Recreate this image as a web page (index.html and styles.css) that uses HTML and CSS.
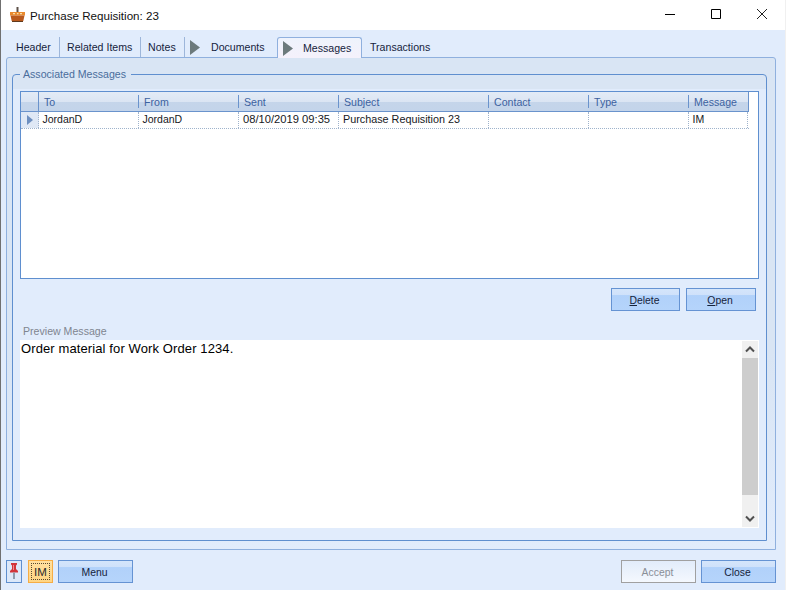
FILE: index.html
```html
<!DOCTYPE html>
<html lang="en">
<head>
<meta charset="utf-8">
<title>Purchase Requisition: 23</title>
<link rel="stylesheet" href="styles.css">
</head>
<body>
<div class="window">
  <header class="titlebar">
    <svg class="app-icon" width="17" height="16" viewBox="0 0 17 16">
      <path d="M7.5 0h2v6h-2z" fill="#5c5048"/>
      <path d="M1 5h15v3.5H1z" fill="#e98a2e"/>
      <path d="M1.5 8.5h14l-1.2 5.5H2.7z" fill="#b9591c"/>
      <path d="M4 6h2v1.200H4zM8 6h1.500v1.200H8zM11 6h2v1.200h-2z" fill="#f9deaa"/>
      <path d="M3 14h11v1H3z" fill="#5f3a1e"/>
    </svg>
    <span class="title">Purchase Requisition: 23</span>
    <div class="win-controls">
      <svg class="win-btn" width="46" height="30" viewBox="0 0 46 30"><path d="M18 14.500h10" stroke="#000" fill="none"/></svg>
      <svg class="win-btn" width="46" height="30" viewBox="0 0 46 30"><path d="M18.500 9.500h9v9h-9z" stroke="#000" fill="none"/></svg>
      <svg class="win-btn" width="46" height="30" viewBox="0 0 46 30"><path d="M18 9l10 10M28 9l-10 10" stroke="#222" fill="none"/></svg>
    </div>
  </header>
  <main class="client">
    <nav class="tabs">
      <span class="tab tab-sep tab-header">Header</span>
      <span class="tab tab-sep tab-related">Related Items</span>
      <span class="tab tab-sep tab-notes">Notes</span>
      <span class="tab tab-docs"><svg class="tab-arrow" width="10" height="15" viewBox="0 0 10 15"><path d="M0 0l10 7.500-10 7.500z" fill="#6c7a7c"/></svg><span>Documents</span></span>
      <span class="tab tab-active"><svg class="tab-arrow" width="10" height="15" viewBox="0 0 10 15"><path d="M0 0l10 7.500-10 7.500z" fill="#6c7a7c"/></svg><span>Messages</span></span>
      <span class="tab tab-trans">Transactions</span>
    </nav>
    <section class="panel">
      <fieldset class="group">
        <legend class="group-label">Associated Messages</legend>
        <div class="grid">
          <div class="grid-head">
            <div class="rowhead"></div>
            <div class="hcell c-to">To</div>
            <div class="hcell c-from">From</div>
            <div class="hcell c-sent">Sent</div>
            <div class="hcell c-subject">Subject</div>
            <div class="hcell c-contact">Contact</div>
            <div class="hcell c-type">Type</div>
            <div class="hcell c-msg">Message</div>
          </div>
          <div class="grid-row">
            <div class="rowhead rowmark"><svg width="6" height="10" viewBox="0 0 6 10"><path d="M0 0l6 5-6 5z" fill="#6d8fc0"/></svg></div>
            <div class="cell c-to">JordanD</div>
            <div class="cell c-from">JordanD</div>
            <div class="cell c-sent cell-date">08/10/2019 09:35</div>
            <div class="cell c-subject cell-subject">Purchase Requisition 23</div>
            <div class="cell c-contact"></div>
            <div class="cell c-type"></div>
            <div class="cell c-msg">IM</div>
          </div>
        </div>
        <div class="grid-actions">
          <button class="btn btn-delete" type="button"><u>D</u>elete</button>
          <button class="btn btn-open" type="button"><u>O</u>pen</button>
        </div>
        <div class="preview-label">Preview Message</div>
        <div class="preview">
          <p class="preview-text">Order material for Work Order 1234.</p>
          <div class="scrollbar">
            <svg class="sb-arrow" width="16" height="17" viewBox="0 0 16 17"><path d="M4 10.500l4-4 4 4" fill="none" stroke="#505050" stroke-width="2"/></svg>
            <div class="sb-thumb"></div>
            <svg class="sb-arrow sb-down" width="16" height="17" viewBox="0 0 16 17"><path d="M4 6.500l4 4 4-4" fill="none" stroke="#505050" stroke-width="2"/></svg>
          </div>
        </div>
      </fieldset>
    </section>
    <footer class="footer">
      <button class="pin" type="button" aria-label="Pin">
        <svg width="12" height="20" viewBox="0 0 12 20">
          <path d="M3 1h6v1.500L8 3.500V7l2 2v1.500H2V9l2-2V3.500L3 2.500z" fill="#d2343a"/>
          <path d="M5 3h1v5H5z" fill="#ef8f92"/>
          <path d="M5 10.500h2V17H5z" fill="#8f9cae"/>
        </svg>
      </button>
      <button class="im" type="button"><span class="im-inner">IM</span></button>
      <button class="btn btn-menu" type="button">Menu</button>
      <div class="spacer"></div>
      <button class="btn btn-disabled" type="button" disabled>Accept</button>
      <button class="btn btn-close" type="button">Close</button>
    </footer>
  </main>
</div>
</body>
</html>
```
FILE: styles.css
```css
* { box-sizing: border-box; }
html, body { margin: 0; padding: 0; }
body { width: 786px; height: 590px; overflow: hidden; background: #fff; font-family: "Liberation Sans", Arial, sans-serif; font-size: 10.6px; color: #15233c; }
.window { width: 786px; height: 590px; display: flex; flex-direction: column; border-left: 1px solid #707070; border-right: 1px solid #f0f0f0; }
.titlebar { height: 30px; flex: none; background: #fff; display: flex; align-items: center; padding-left: 8px; }
.app-icon { flex: none; }
.title { margin-left: 4px; font-size: 11.6px; color: #111; }
.win-controls { margin-left: auto; display: flex; }
.win-btn { display: block; }
.client { flex: 1; background: #e1ecfc; display: flex; flex-direction: column; min-height: 0; }
.tabs { height: 27px; flex: none; display: flex; align-items: flex-end; padding-left: 6px; }
.tab { height: 20px; display: flex; align-items: center; color: #15233c; white-space: nowrap; }
.tab-sep { border-right: 1px solid #9db6da; }
.tab-header { width: 53px; padding-left: 9px; }
.tab-related { width: 81px; padding-left: 7px; }
.tab-notes { width: 44px; padding-left: 7px; }
.tab-docs { width: 92px; padding-left: 5px; }
.tab-docs span { margin-left: 11px; }
.tab-active { width: 85px; height: 21px; padding-left: 5px; border: 1px solid #8fb0de; border-bottom: 0; border-radius: 3px 3px 0 0; background: linear-gradient(#eef3fc, #f5f1fb); margin-bottom: -1px; position: relative; }
.tab-active span { margin-left: 10px; }
.tab-trans { padding-left: 8px; }
.tab-arrow { flex: none; }
.panel { margin-left: 5px; width: 770px; height: 493px; flex: none; background: linear-gradient(#d9e5f4 0, #d9e5f4 60%, #e1ecfc 100%); border: 1px solid #8fb0de; border-radius: 3px 3px 0 0; padding: 10px 8px 8px 5px; }
.group { margin: 0; min-width: 0; width: 755px; height: 473px; padding: 0 7px; border: 1px solid #5f8fcf; border-radius: 4px 4px 0 0; background: linear-gradient(#d9e5f4 0, #d9e5f4 14px, #e1ecfc 14px); }
.group-label { margin: 0; padding: 0 5px 0 3px; font-size: 10.6px; line-height: 13px; color: #4a6d9c; }
.grid { margin-top: 10px; height: 188px; background: #fff; border: 1px solid #5f8fcf; }
.grid-head { height: 20px; display: flex; width: 728px; border-bottom: 1px solid #6a93cc; border-right: 1px solid #6a93cc; background: linear-gradient(#e3ebf6 0, #dbe5f3 50%, #c5d5ea 50%, #c3d4ea 100%); }
.rowhead { width: 18px; flex: none; border-right: 1px solid #6a93cc; }
.hcell { flex: none; height: 13px; color: #3c62a0; border-right: 1px solid #6a93cc; margin: 3px 0; line-height: 15px; padding-left: 5px; white-space: nowrap; }
.hcell.c-msg { border-right: 0; }
.grid-row { display: flex; height: 17px; width: 728px; border-bottom: 1px dotted #9fb3cc; }
.rowmark { display: flex; align-items: center; justify-content: center; background: #dfe8f5; border-right: 1px dotted #9fb3cc; }
.cell { flex: none; border-right: 1px dotted #9fb3cc; padding-left: 3.500px; line-height: 15px; font-size: 10.5px; color: #16181d; white-space: nowrap; overflow: hidden; }
.cell-date { font-size: 11.2px; padding-left: 4px; }
.cell-subject { font-size: 10.8px; padding-left: 4px; }
.c-to { width: 100px; }
.c-from { width: 100px; }
.c-sent { width: 100px; }
.c-subject { width: 150px; }
.c-contact { width: 100px; }
.c-type { width: 100px; }
.c-msg { width: 59px; }
.grid-actions { display: flex; justify-content: flex-end; gap: 6px; margin-top: 9px; padding-right: 3px; }
.btn { font: inherit; font-size: 10.4px; color: #15233c; height: 23px; padding: 1px 2px 0 0; border: 1px solid #6593d3; background: linear-gradient(#d4e5fb 0, #cfe1fa 30%, #b1d1fa 31%, #b5d4fb 100%); text-align: center; }
.btn-delete { width: 69px; }
.btn-open { width: 70px; }
.preview-label { margin-top: 14px; height: 15px; line-height: 13px; font-size: 10.6px; padding-left: 3px; color: #7f8590; }
.preview { height: 188px; display: flex; background: #fff; }
.preview-text { margin: 0; flex: 1; padding: 1px 1px 0; font-size: 13px; letter-spacing: .11px; color: #000; line-height: 16px; }
.scrollbar { width: 16px; margin: 1px 1px 1px 0; background: #f0f0f0; display: flex; flex-direction: column; }
.sb-arrow { flex: none; display: block; }
.sb-thumb { height: 137px; flex: none; background: #cdcdcd; }
.sb-down { margin-top: auto; }
.footer { flex: 1; display: flex; align-items: flex-start; padding: 10px 9px 0 5px; }
.pin { width: 16px; height: 23px; padding: 0; border: 1px solid #5f8fcf; background: #dce8f9; display: flex; align-items: center; justify-content: center; }
.im { width: 25px; height: 23px; margin-left: 6px; padding: 2px; border: 1px solid #f6ad45; background: linear-gradient(#ffe0a0, #ffd583); font: inherit; color: #2a2a2a; }
.im-inner { display: flex; align-items: center; justify-content: center; height: 100%; border: 1px dotted #5a4a30; font-size: 11.5px; }
.btn-menu { width: 75px; margin-left: 5px; }
.spacer { flex: 1; }
.btn-disabled { width: 75px; border-color: #a0a0a0; color: #8a8f98; background: linear-gradient(#e2ecfa, #f4f8fe); }
.btn-close { width: 75px; margin-left: 5px; }
```
